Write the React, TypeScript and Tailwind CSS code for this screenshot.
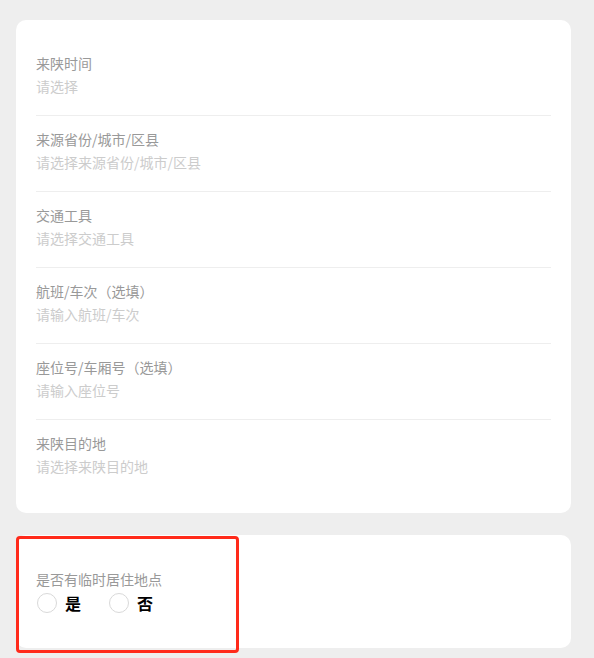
import React from "react";

const rows = [
  ["来陕时间", "请选择"],
  ["来源省份/城市/区县", "请选择来源省份/城市/区县"],
  ["交通工具", "请选择交通工具"],
  ["航班/车次（选填）", "请输入航班/车次"],
  ["座位号/车厢号（选填）", "请输入座位号"],
  ["来陕目的地", "请选择来陕目的地"],
];

const font = { fontFamily: '"Noto Sans CJK SC", "Noto Sans", sans-serif' };

export default function App() {
  return (
    <div className="min-h-[658px] w-[594px] bg-[#eeeeee] pl-4 pr-[23px] pt-5 pb-2" style={font}>
      <div className="rounded-[10px] bg-white px-5 pt-[20px] pb-[18px]">
        {rows.map(([label, ph], i) => (
          <div
            key={label}
            className={
              "pt-[13px] pb-[19px] " +
              (i < rows.length - 1 ? "border-b border-[#eeeeee]" : "")
            }
          >
            <div className="text-[14px] leading-[20px] text-[#999999]">{label}</div>
            <div className="mt-[3px] text-[14px] leading-[20px] text-[#cccccc]">{ph}</div>
          </div>
        ))}
      </div>
      <div className="relative mt-[22px] h-[113px] rounded-[10px] bg-white px-5 pt-[34px]">
        <div className="text-[14px] leading-[20px] text-[#999999]">是否有临时居住地点</div>
        <div className="mt-[4px] flex items-center">
          <div className="flex items-center">
            <span className="ml-px h-[20px] w-[20px] rounded-full border border-[#d9d9d9] bg-white" />
            <span className="ml-[8px] text-[16px] font-bold leading-[20px] text-black">是</span>
          </div>
          <div className="ml-[28px] flex items-center">
            <span className="h-[20px] w-[20px] rounded-full border border-[#d9d9d9] bg-white" />
            <span className="ml-[8px] text-[16px] font-bold leading-[20px] text-black">否</span>
          </div>
        </div>
        <div className="pointer-events-none absolute left-0 top-[1px] h-[117px] w-[223px] rounded-[4px] border-[3px] border-[#ff2a1a]" />
      </div>
    </div>
  );
}
